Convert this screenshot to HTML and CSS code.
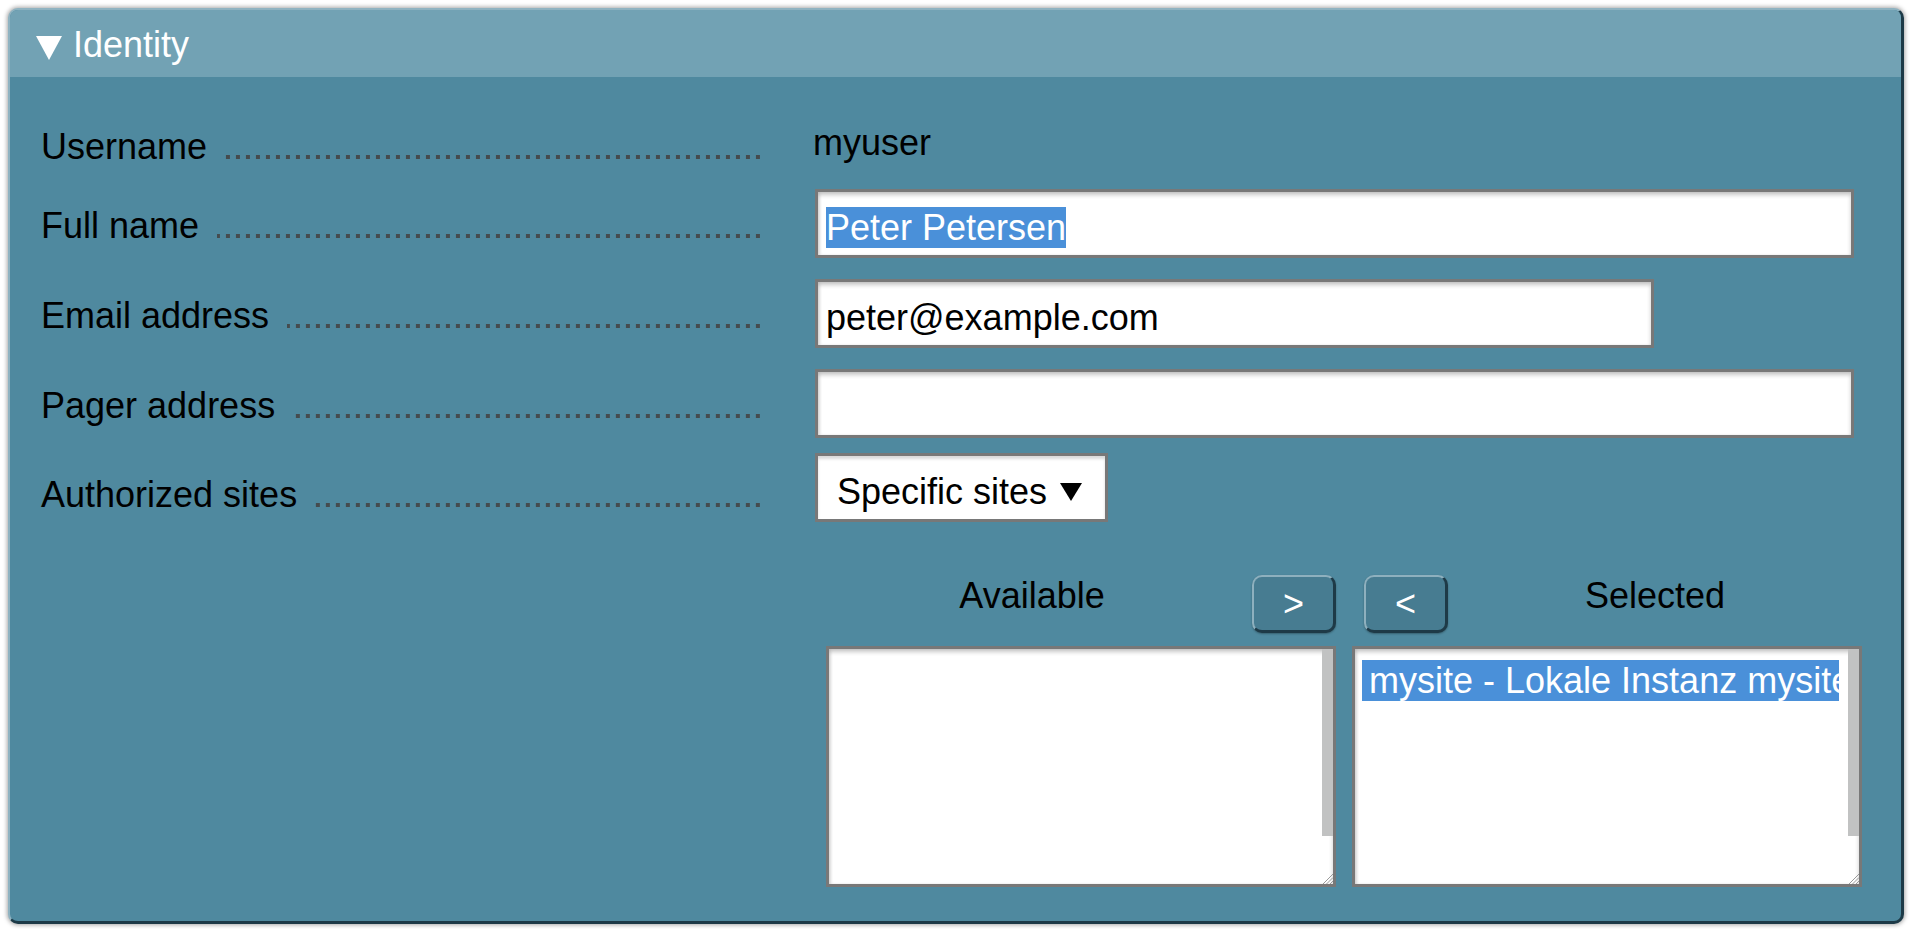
FILE: index.html
```html
<!DOCTYPE html>
<html lang="en">
<head>
<meta charset="utf-8">
<title>Identity</title>
<link rel="stylesheet" href="styles.css">
</head>
<body>
<div class="panel">
  <div class="panel-head">
    <svg class="caret" width="26" height="24" viewBox="0 0 26 24"><polygon points="0,0 26,0 13,24" fill="#ffffff"/></svg>
    <span class="panel-title">Identity</span>
  </div>
  <div class="panel-body">
    <div class="form">
      <div class="row row-user">
        <div class="label"><span class="label-text">Username</span><span class="leader"></span></div>
        <div class="value-text">myuser</div>
      </div>
      <div class="row">
        <div class="label"><span class="label-text">Full name</span><span class="leader"></span></div>
        <div class="field field-wide"><span class="sel">Peter Petersen</span></div>
      </div>
      <div class="row">
        <div class="label"><span class="label-text">Email address</span><span class="leader"></span></div>
        <div class="field field-email">peter@example.com</div>
      </div>
      <div class="row">
        <div class="label"><span class="label-text">Pager address</span><span class="leader"></span></div>
        <div class="field field-wide"></div>
      </div>
      <div class="row row-sites">
        <div class="label"><span class="label-text">Authorized sites</span><span class="leader"></span></div>
        <div class="field field-select">Specific sites<svg class="select-arrow" width="22" height="18" viewBox="0 0 22 18"><polygon points="0,0 22,0 11,18" fill="#000000"/></svg></div>
      </div>
    </div>
    <div class="picker">
      <div class="picker-head">
        <span class="picker-title">Available</span>
        <button class="move-btn move-add" type="button">&gt;</button>
      </div>
      <div class="picker-head">
        <button class="move-btn move-remove" type="button">&lt;</button>
        <span class="picker-title">Selected</span>
      </div>
      <div class="listbox">
        <div class="list-items"></div>
        <div class="scroll"><div class="thumb"></div></div>
        <svg class="grip" width="11" height="11" viewBox="0 0 11 11"><path d="M11 1 L1 11 M11 4.5 L4.5 11 M11 8 L8 11" stroke="#9a9a9a" stroke-width="1" fill="none"/></svg>
      </div>
      <div class="listbox">
        <div class="list-items">
          <div class="option option-selected">mysite - Lokale Instanz mysite</div>
        </div>
        <div class="scroll"><div class="thumb"></div></div>
        <svg class="grip" width="11" height="11" viewBox="0 0 11 11"><path d="M11 1 L1 11 M11 4.5 L4.5 11 M11 8 L8 11" stroke="#9a9a9a" stroke-width="1" fill="none"/></svg>
      </div>
    </div>
  </div>
</div>
</body>
</html>
```

FILE: styles.css
```css
html, body {
  margin: 0;
  padding: 0;
  background: #ffffff;
}

body {
  font-family: "Liberation Sans", Arial, sans-serif;
  font-size: 36px;
  line-height: 41px;
  color: #000000;
}

.panel {
  margin: 8px;
  border-style: solid;
  border-width: 2px 3px 3px 2px;
  border-color: #8fb3c1 #1d3a47 #1d3a47 #8fb3c1;
  border-radius: 10px;
  background: #4f899f;
  box-shadow: 0 0 4px 1px rgba(0, 0, 0, 0.35);
  overflow: hidden;
}

.panel-head {
  height: 67px;
  background: #72a2b4;
  display: flex;
  align-items: center;
  padding-left: 26px;
  color: #ffffff;
}

.caret {
  margin-top: 8px;
  margin-right: 11px;
  flex: none;
}

.panel-title {
  padding-top: 2px;
}

.panel-body {
  padding: 43px 46px 34px 31px;
}

.form {
  display: flex;
  flex-direction: column;
  gap: 21px;
}

.row {
  display: flex;
  align-items: center;
  height: 69px;
}

.row-user {
  height: 48px;
}

.row-user .value-text {
  align-self: flex-start;
  padding-top: 2px;
}

.row-sites {
  margin-top: -6px;
}

.label {
  flex: none;
  width: 722px;
  margin-right: 52px;
  display: flex;
  align-items: baseline;
  padding-top: 3px;
}

.row-user .label {
  padding-top: 5px;
}

.row-sites .label {
  padding-top: 13px;
}

.label-text {
  white-space: nowrap;
}

.leader {
  flex: 1;
  min-width: 0;
  height: 4px;
  margin-left: 18px;
  background-image: linear-gradient(to right, transparent 3.3px, #454b4e 3.3px, #454b4e 6.8px, transparent 6.8px);
  background-size: 10px 3.6px;
  background-repeat: repeat-x;
  background-position: right 0 bottom 0;
}

.value-text {
  margin-left: -2px;
}

.field {
  box-sizing: border-box;
  height: 69px;
  border: 3px solid #787878;
  background: #ffffff;
  padding: 15px 8px 0 8px;
  white-space: nowrap;
  overflow: hidden;
  box-shadow: inset 0 3px 4px rgba(0, 0, 0, 0.22), inset 2px 0 3px rgba(0, 0, 0, 0.08);
}

.field-wide {
  width: 1039px;
}

.field-email {
  width: 839px;
}

.field-select {
  width: 293px;
  padding-left: 19px;
  box-shadow: inset 0 3px 3px rgba(0, 0, 0, 0.15);
}

.select-arrow {
  margin-left: 13px;
  vertical-align: 3px;
}

.sel {
  background: #4a90d9;
  color: #ffffff;
}

.picker {
  margin-top: 53px;
  margin-left: 785px;
  width: 1036px;
  display: grid;
  grid-template-columns: 510px 510px;
  column-gap: 16px;
  row-gap: 13px;
}

.picker-head {
  display: flex;
  align-items: flex-start;
  height: 58px;
}

.picker-title {
  flex: 1;
  text-align: center;
  white-space: nowrap;
}

.move-btn {
  box-sizing: border-box;
  width: 84px;
  height: 58px;
  padding: 0;
  margin: 0;
  font-family: "Liberation Sans", Arial, sans-serif;
  font-size: 36px;
  line-height: 1;
  color: #ffffff;
  background: #477c91;
  border-style: solid;
  border-width: 2px 3px 3px 2px;
  border-color: #8eb0be #1e3a47 #1e3a47 #8eb0be;
  border-radius: 10px;
  box-shadow: 0 1px 2px rgba(0, 0, 0, 0.3);
}

.move-add {
  margin-left: 14px;
}

.move-remove {
  margin-left: 12px;
}

.listbox {
  position: relative;
  box-sizing: border-box;
  height: 241px;
  border: 3px solid #787878;
  background: #ffffff;
  display: flex;
  box-shadow: inset 0 3px 4px rgba(0, 0, 0, 0.22), inset 2px 0 3px rgba(0, 0, 0, 0.08);
}

.list-items {
  flex: 1;
  min-width: 0;
  padding-top: 11px;
}

.option {
  margin: 0 9px 0 7px;
  padding-left: 7px;
  height: 41px;
  white-space: nowrap;
  overflow: hidden;
}

.option-selected {
  background: #4a90d9;
  color: #ffffff;
}

.scroll {
  flex: none;
  width: 11px;
}

.thumb {
  height: 187px;
  background: #c1c2c2;
}

.grip {
  position: absolute;
  right: 0;
  bottom: 0;
}
```
